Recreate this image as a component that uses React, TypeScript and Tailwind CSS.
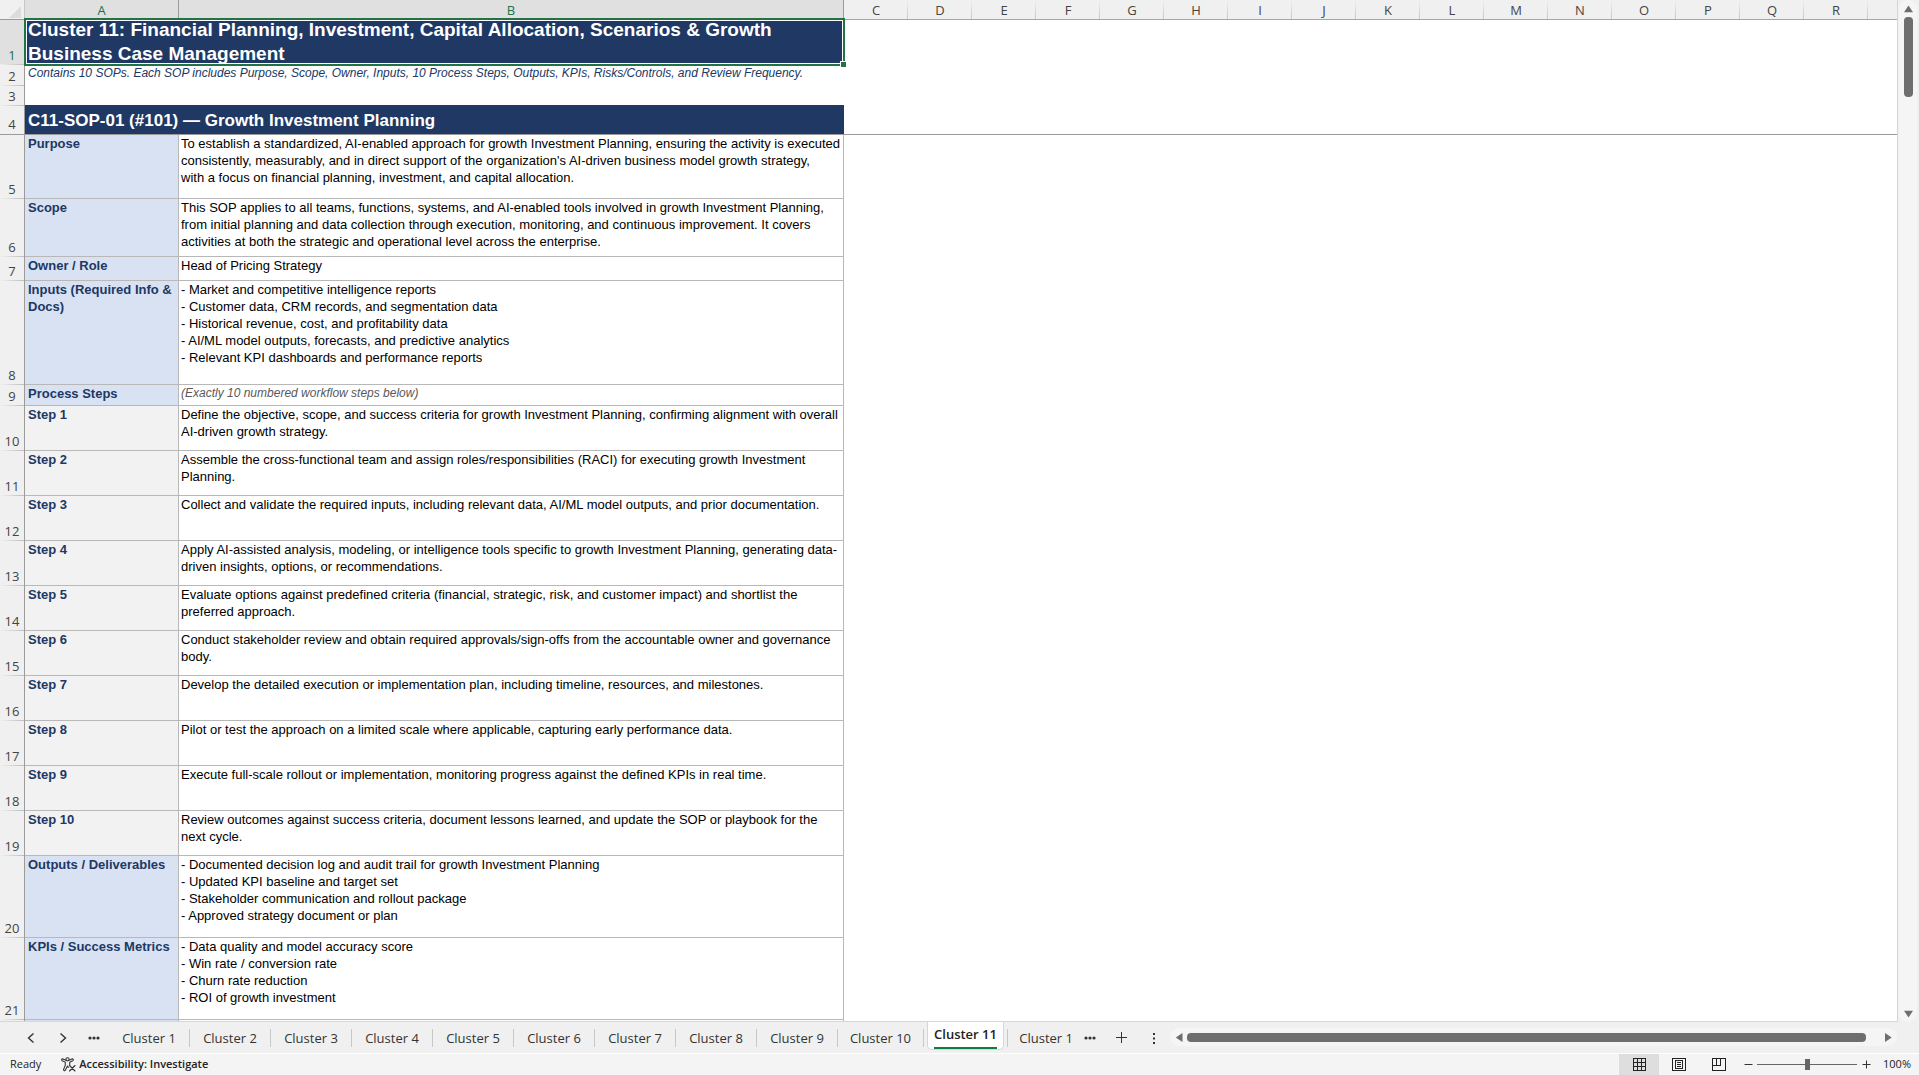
import React from "react";
import clsx from "clsx";

type Row = {
  n: number;
  h: string;
  label: string;
  text: string;
  kind?: "step" | "note";
};

const columns = ["C", "D", "E", "F", "G", "H", "I", "J", "K", "L", "M", "N", "O", "P", "Q", "R"];

const rows: Row[] = [
  {
    n: 5,
    h: "h-[64px]",
    label: "Purpose",
    text: "To establish a standardized, AI-enabled approach for growth Investment Planning, ensuring the activity is executed\nconsistently, measurably, and in direct support of the organization's AI-driven business model growth strategy,\nwith a focus on financial planning, investment, and capital allocation.",
  },
  {
    n: 6,
    h: "h-[58px]",
    label: "Scope",
    text: "This SOP applies to all teams, functions, systems, and AI-enabled tools involved in growth Investment Planning,\nfrom initial planning and data collection through execution, monitoring, and continuous improvement. It covers\nactivities at both the strategic and operational level across the enterprise.",
  },
  { n: 7, h: "h-[24px]", label: "Owner / Role", text: "Head of Pricing Strategy" },
  {
    n: 8,
    h: "h-[104px]",
    label: "Inputs (Required Info &\nDocs)",
    text: "- Market and competitive intelligence reports\n- Customer data, CRM records, and segmentation data\n- Historical revenue, cost, and profitability data\n- AI/ML model outputs, forecasts, and predictive analytics\n- Relevant KPI dashboards and performance reports",
  },
  { n: 9, h: "h-[21px]", label: "Process Steps", text: "(Exactly 10 numbered workflow steps below)", kind: "note" },
  {
    n: 10,
    h: "h-[45px]",
    label: "Step 1",
    text: "Define the objective, scope, and success criteria for growth Investment Planning, confirming alignment with overall\nAI-driven growth strategy.",
    kind: "step",
  },
  {
    n: 11,
    h: "h-[45px]",
    label: "Step 2",
    text: "Assemble the cross-functional team and assign roles/responsibilities (RACI) for executing growth Investment\nPlanning.",
    kind: "step",
  },
  {
    n: 12,
    h: "h-[45px]",
    label: "Step 3",
    text: "Collect and validate the required inputs, including relevant data, AI/ML model outputs, and prior documentation.",
    kind: "step",
  },
  {
    n: 13,
    h: "h-[45px]",
    label: "Step 4",
    text: "Apply AI-assisted analysis, modeling, or intelligence tools specific to growth Investment Planning, generating data-\ndriven insights, options, or recommendations.",
    kind: "step",
  },
  {
    n: 14,
    h: "h-[45px]",
    label: "Step 5",
    text: "Evaluate options against predefined criteria (financial, strategic, risk, and customer impact) and shortlist the\npreferred approach.",
    kind: "step",
  },
  {
    n: 15,
    h: "h-[45px]",
    label: "Step 6",
    text: "Conduct stakeholder review and obtain required approvals/sign-offs from the accountable owner and governance\nbody.",
    kind: "step",
  },
  {
    n: 16,
    h: "h-[45px]",
    label: "Step 7",
    text: "Develop the detailed execution or implementation plan, including timeline, resources, and milestones.",
    kind: "step",
  },
  {
    n: 17,
    h: "h-[45px]",
    label: "Step 8",
    text: "Pilot or test the approach on a limited scale where applicable, capturing early performance data.",
    kind: "step",
  },
  {
    n: 18,
    h: "h-[45px]",
    label: "Step 9",
    text: "Execute full-scale rollout or implementation, monitoring progress against the defined KPIs in real time.",
    kind: "step",
  },
  {
    n: 19,
    h: "h-[45px]",
    label: "Step 10",
    text: "Review outcomes against success criteria, document lessons learned, and update the SOP or playbook for the\nnext cycle.",
    kind: "step",
  },
  {
    n: 20,
    h: "h-[82px]",
    label: "Outputs / Deliverables",
    text: "- Documented decision log and audit trail for growth Investment Planning\n- Updated KPI baseline and target set\n- Stakeholder communication and rollout package\n- Approved strategy document or plan",
  },
  {
    n: 21,
    h: "h-[82px]",
    label: "KPIs / Success Metrics",
    text: "- Data quality and model accuracy score\n- Win rate / conversion rate\n- Churn rate reduction\n- ROI of growth investment",
  },
];

const tabs = [1, 2, 3, 4, 5, 6, 7, 8, 9];

const RowHead = ({ n, active, frozenEdge }: { n: number; active?: boolean; frozenEdge?: boolean }) => (
  <th
    scope="row"
    className={clsx(
      "border-r border-[#9b9b9b] p-0 pb-px align-bottom text-center font-['Open_Sans',sans-serif] text-[13px] leading-[18px] font-normal bg-no-repeat bg-bottom bg-[length:100%_1px]",
      active ? "bg-[#e0e0e0] text-[#217346]" : "bg-[#f0f0f0] text-[#444]",
      frozenEdge ? "border-b" : "bg-[linear-gradient(to_right,#f0f0f0,#bdbdbd)]"
    )}
  >
    {n}
  </th>
);

const Sheet = () => (
  <table className="w-full table-fixed border-separate border-spacing-0 font-['Liberation_Sans',Arial,sans-serif]">
    <colgroup>
      <col className="w-[25px]" />
      <col className="w-[154px]" />
      <col className="w-[665px]" />
      {columns.map((c) => (
        <col key={c} className="w-[64px]" />
      ))}
      <col />
    </colgroup>
    <thead>
      <tr className="h-[20px] font-['Open_Sans',sans-serif] text-[13px] leading-[18px]">
        <td className="border-r border-b border-[#9b9b9b] border-r-[#c6c6c6] bg-[#f0f0f0] p-0">
          <svg className="ml-2 mt-1 block h-3 w-[13px]" viewBox="0 0 13 12">
            <path d="M13 0v12H1z" fill="#dcdcdc" />
          </svg>
        </td>
        {["A", "B"].map((c) => (
          <th
            key={c}
            scope="col"
            className="border-r border-b border-[#9b9b9b] bg-[#e0e0e0] p-0 pt-px text-center font-normal text-[#217346]"
          >
            {c}
          </th>
        ))}
        {columns.map((c) => (
          <th
            key={c}
            scope="col"
            className="border-b border-[#a6a6a6] bg-[#f0f0f0] bg-[linear-gradient(to_bottom,#f0f0f0,#c6c6c6)] bg-[length:1px_100%] bg-right bg-no-repeat p-0 pt-px text-center font-normal text-[#444]"
          >
            {c}
          </th>
        ))}
        <td className="border-b border-[#a6a6a6] bg-[#f0f0f0] p-0" />
      </tr>
    </thead>
    <tbody>
      <tr className="h-[45px]">
        <RowHead n={1} active />
        <td colSpan={2} className="relative bg-[#203864] p-0 align-top text-white">
          <div className="flex h-[43px] items-center overflow-hidden pl-[3px] text-[19px] leading-[24px] font-bold whitespace-pre">
            {"Cluster 11: Financial Planning, Investment, Capital Allocation, Scenarios & Growth\nBusiness Case Management"}
          </div>
          {/* selection frame and fill handle */}
          <div className="absolute -inset-x-px -top-[2px] -bottom-px border-2 border-[#217346]">
            <div className="h-full border border-white" />
            <div className="absolute -right-[3px] -bottom-[3px] h-[6px] w-[6px] border-t border-l border-white bg-[#217346]" />
          </div>
        </td>
        <td colSpan={17} />
      </tr>
      <tr className="h-[21px]">
        <RowHead n={2} />
        <td colSpan={2} className="p-0 pl-[3px] align-top text-[12px] leading-[16px] whitespace-pre text-[#203864] italic">
          Contains 10 SOPs. Each SOP includes Purpose, Scope, Owner, Inputs, 10 Process Steps, Outputs, KPIs, Risks/Controls, and Review Frequency.
        </td>
        <td colSpan={17} />
      </tr>
      <tr className="h-[20px]">
        <RowHead n={3} />
        <td colSpan={2} className="border-b border-[#203864]" />
        <td colSpan={17} />
      </tr>
      <tr className="h-[29px]">
        <RowHead n={4} frozenEdge />
        <td
          colSpan={2}
          className="border-b border-[#9b9b9b] bg-[#203864] p-0 pt-px pl-[3px] align-middle text-[17px] leading-[20px] font-bold text-white"
        >
          C11-SOP-01 (#101) — Growth Investment Planning
        </td>
        <td colSpan={17} className="border-b border-[#9b9b9b]" />
      </tr>
      {rows.map((r) => (
        <tr key={r.n} className={r.h}>
          <RowHead n={r.n} />
          <td
            className={clsx(
              "border-r border-b border-[#b8b8b8] p-0 pl-[3px] align-top text-[13px] leading-[17px] font-bold whitespace-pre text-[#203864]",
              r.kind === "step" ? "bg-[#f2f2f2]" : "bg-[#d9e2f3]"
            )}
          >
            {r.label}
          </td>
          <td
            className={clsx(
              "border-r border-b border-[#b8b8b8] p-0 pl-[2px] align-top whitespace-pre",
              r.kind === "note" ? "text-[12px] leading-[16px] text-[#595959] italic" : "text-[13px] leading-[17px] text-black"
            )}
          >
            {r.text}
          </td>
          <td colSpan={17} />
        </tr>
      ))}
      <tr className="h-[45px]">
        <td className="border-r border-[#9b9b9b] bg-[#f0f0f0]" />
        <td className="border-r border-[#b8b8b8] bg-[#d9e2f3]" />
        <td className="border-r border-[#b8b8b8]" />
        <td colSpan={17} />
      </tr>
    </tbody>
  </table>
);

const Dots = () => (
  <svg className="h-3 w-3" viewBox="0 0 12 12" fill="#333">
    <circle cx="2" cy="6" r="1.6" />
    <circle cx="6" cy="6" r="1.6" />
    <circle cx="10" cy="6" r="1.6" />
  </svg>
);

const VerticalScroll = () => (
  <div className="flex w-[22px] shrink-0 flex-col border-l border-[#d6d6d6] bg-[#f0f0f0] pr-[2px] pl-px">
    <div className="flex flex-1 flex-col items-center rounded-[9px] bg-[#f5f5f5]">
      <button aria-label="Scroll up" className="flex h-[17px] items-center">
        <svg className="h-[8px] w-[9px]" viewBox="0 0 9 8" fill="#6e6e6e">
          <path d="M4.5 0.5 9 7.2H0z" />
        </svg>
      </button>
      <div className="h-[80px] w-[9px] rounded-[4px] bg-[#6e6e6e]" />
      <button aria-label="Scroll down" className="mt-auto flex h-[17px] items-center">
        <svg className="h-[8px] w-[9px]" viewBox="0 0 9 8" fill="#6e6e6e">
          <path d="M0 0.8h9L4.5 7.5z" />
        </svg>
      </button>
    </div>
  </div>
);

const TabBar = () => (
  <div className="flex h-[32px] shrink-0 items-start border-b border-white bg-[#f0f0f0] font-['Open_Sans',sans-serif] text-[13px] text-[#333]">
    <nav className="flex h-[31px] w-[1170px] shrink-0 pl-[15px]">
      <button aria-label="Previous sheet" className="flex w-[32px] items-center justify-center">
        <svg className="h-3 w-3" viewBox="0 0 12 12" fill="none" stroke="#333" strokeWidth="1.4">
          <path d="M8.5 1.5 3.5 6l5 4.5" />
        </svg>
      </button>
      <button aria-label="Next sheet" className="flex w-[32px] items-center justify-center">
        <svg className="h-3 w-3" viewBox="0 0 12 12" fill="none" stroke="#333" strokeWidth="1.4">
          <path d="M3.5 1.5l5 4.5-5 4.5" />
        </svg>
      </button>
      <button aria-label="More sheets" className="flex w-[30px] items-center justify-center">
        <Dots />
      </button>
      {tabs.map((t) => (
        <button key={t} className="my-auto h-[18px] w-[81px] border-r border-[#c8c8c8] leading-[18px]">
          Cluster {t}
        </button>
      ))}
      <button className="my-auto h-[18px] w-[86px] border-r border-[#c8c8c8] leading-[18px]">Cluster 10</button>
      <button className="mx-[3px] flex h-[28px] w-[77px] justify-center rounded-b-[5px] border border-t-0 border-[#d6d6d6] bg-white">
        <span className="mt-[2px] border-b-2 border-[#107c41] leading-[20px] font-semibold text-[#222]">Cluster 11</span>
      </button>
      <button className="my-auto h-[18px] w-[66px] border-l border-[#c8c8c8] text-right leading-[18px]">Cluster 1</button>
      <button aria-label="More sheets to the right" className="flex w-[34px] items-center justify-center">
        <Dots />
      </button>
      <button aria-label="New sheet" className="flex w-[30px] items-center justify-center">
        <svg className="h-3 w-3" viewBox="0 0 12 12" stroke="#333" strokeWidth="1">
          <path d="M5.5 0v11M0 5.5h11" />
        </svg>
      </button>
      <div className="ml-[11px] flex w-[12px] items-center justify-center">
        <svg className="h-3 w-3" viewBox="0 0 12 12" fill="#333">
          <path d="M5 1h2v2H5zM5 5.500h2v2H5zM5 10h2v2H5z" />
        </svg>
      </div>
    </nav>
    <div className="mt-[6px] mr-[22px] flex h-[18px] flex-1 items-center rounded-[9px] bg-[#f5f5f5]">
      <button aria-label="Scroll left" className="flex w-[17px] justify-center">
        <svg className="h-[9px] w-[8px]" viewBox="0 0 8 9" fill="#6e6e6e">
          <path d="M7.5 0v9L0.8 4.5z" />
        </svg>
      </button>
      <div className="h-[9px] flex-1 rounded-[4px] bg-[#6e6e6e]" />
      <button aria-label="Scroll right" className="ml-[18px] flex w-[13px]">
        <svg className="h-[9px] w-[8px]" viewBox="0 0 8 9" fill="#6e6e6e">
          <path d="M1 0v9l6.7-4.5z" />
        </svg>
      </button>
    </div>
  </div>
);

const StatusBar = () => (
  <footer className="flex h-[21px] shrink-0 items-center bg-[#f4f4f4] pr-2 pl-[10px] font-['Open_Sans',sans-serif] text-[11px] text-[#222]">
    <span>Ready</span>
    <button className="ml-5 flex items-center gap-[3px] font-semibold">
      <svg className="h-[15px] w-[15px]" viewBox="0 0 15 15" fill="none" stroke="#333" strokeWidth="1.1" strokeLinecap="round" strokeLinejoin="round">
        <circle cx="6.5" cy="2.3" r="1.6" />
        <path d="M4.9 3.2 2 1.9C.7 1.6.2 3.2 1.3 3.8L4.3 5.2v2.9L2.6 12.4c-.3 1.3 1.3 1.8 1.8.7L6.5 9l.9 1.5" />
        <path d="M8.1 3.2 11 1.9c1.3-.3 1.8 1.3.7 1.9L8.7 5.2v2.6" />
        <path d="m8.5 8.500 5.500 5.500M14 8.500 8.500 14" />
      </svg>
      Accessibility: Investigate
    </button>
    <div className="ml-auto flex h-full items-center">
      <button aria-label="Normal view" className="flex h-full w-[40px] items-center justify-center bg-[#dedede]">
        <svg className="h-[13px] w-[13px]" viewBox="0 0 13 13" fill="none" stroke="#222" shapeRendering="crispEdges">
          <path d="M.5.5h12v12H.5zM4.5.5v12M8.5.5v12M.5 4.5h12M.5 8.5h12" />
        </svg>
      </button>
      <button aria-label="Page layout view" className="flex h-full w-[40px] items-center justify-center">
        <svg className="h-[13px] w-[14px]" viewBox="0 0 14 13" fill="none" stroke="#222" shapeRendering="crispEdges">
          <path d="M.5.5h13v12H.5zM3.5 2.5h7v8h-7zM5 4.5h4M5 6.5h4M5 8.5h4" />
        </svg>
      </button>
      <button aria-label="Page break preview" className="flex h-full w-[40px] items-center justify-center">
        <svg className="h-[13px] w-[14px]" viewBox="0 0 14 13" fill="none" stroke="#222" shapeRendering="crispEdges">
          <path d="M.5.5h13v12H.5zM4.5.5v7M.5 7.5h8M8.5.5v7" />
        </svg>
      </button>
      <button aria-label="Zoom out" className="ml-[3px] w-[12px]">
        <svg className="mx-auto h-[9px] w-[9px]" viewBox="0 0 9 9" stroke="#333">
          <path d="M.5 4.5h8" />
        </svg>
      </button>
      <input
        type="range"
        aria-label="Zoom"
        min={0}
        max={100}
        defaultValue={50}
        className="mx-[3px] h-[11px] w-[100px] appearance-none bg-[linear-gradient(#666,#666)] bg-[length:100%_1px] bg-center bg-no-repeat [&::-webkit-slider-thumb]:h-[11px] [&::-webkit-slider-thumb]:w-[5px] [&::-webkit-slider-thumb]:appearance-none [&::-webkit-slider-thumb]:bg-[#666]"
      />
      <button aria-label="Zoom in" className="w-[12px]">
        <svg className="mx-auto h-[9px] w-[9px]" viewBox="0 0 9 9" stroke="#333">
          <path d="M.5 4.5h8M4.5.5v8" />
        </svg>
      </button>
      <button className="w-[39px] text-right">100%</button>
    </div>
  </footer>
);

export default function App() {
  return (
    <div className="flex h-screen flex-col overflow-hidden bg-white">
      <div className="flex min-h-0 flex-1 bg-[#f0f0f0]">
        <main className="min-w-0 flex-1 overflow-hidden border-b border-[#d6d6d6] bg-white">
          <Sheet />
        </main>
        <VerticalScroll />
      </div>
      <TabBar />
      <StatusBar />
    </div>
  );
}
